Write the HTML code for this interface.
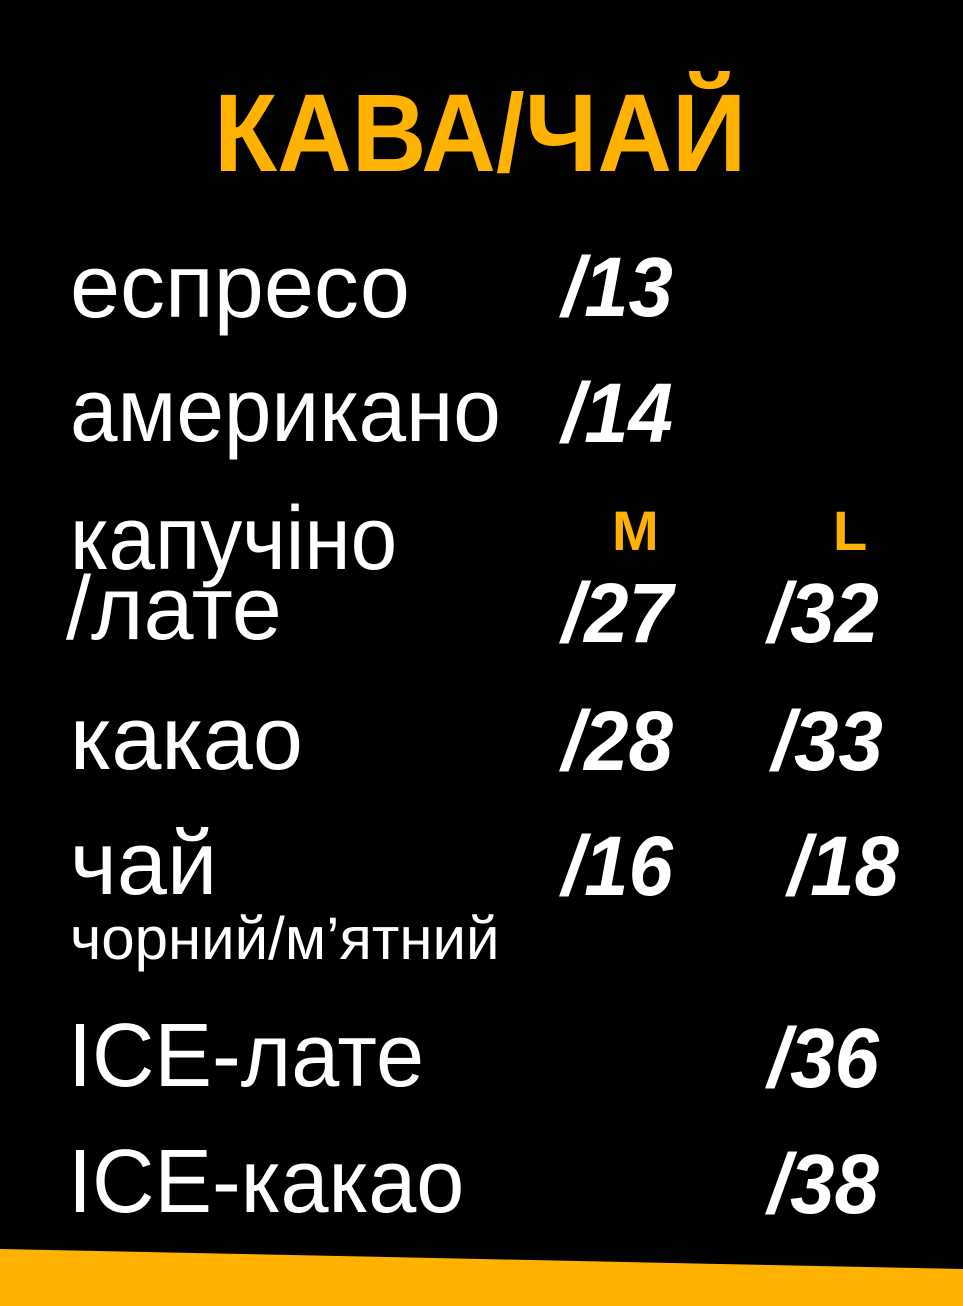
<!DOCTYPE html>
<html><head><meta charset="utf-8"><style>
html,body{margin:0;padding:0;background:#000;width:963px;height:1306px;overflow:hidden;position:relative;font-family:"Liberation Sans",sans-serif}
.t{position:absolute;line-height:1;white-space:nowrap;transform-origin:0 0}
.i{color:#fff;font-size:90px;font-weight:400}
.p{color:#fff;font-size:84px;font-weight:700;font-style:italic;transform:scaleX(.95)}
.y{color:#FFB200;font-weight:700}
</style></head><body>
<div class="t y" style="left:214px;top:79px;font-size:110px;transform:scaleX(.94)">КАВА/ЧАЙ</div>

<div class="t i" style="left:70px;top:242px">еспресо</div>
<div class="t i" style="left:70px;top:366px;transform:scaleX(.95)">американо</div>
<div class="t i" style="left:70px;top:494px;transform:scaleX(.93)">капучіно</div>
<div class="t i" style="left:66px;top:564px">/лате</div>
<div class="t i" style="left:70px;top:694px">какао</div>
<div class="t i" style="left:70px;top:819px">чай</div>
<div class="t i" style="left:70px;top:909px;font-size:60px">чорний/м’ятний</div>
<div class="t i" style="left:68px;top:1011px;transform:scaleX(.96)">ICE-лате</div>
<div class="t i" style="left:68px;top:1137px;transform:scaleX(.96)">ICE-какао</div>

<div class="t y" style="left:612px;top:503px;font-size:56px">M</div>
<div class="t y" style="left:833px;top:503px;font-size:56px">L</div>

<div class="t p" style="left:562px;top:245px">/13</div>
<div class="t p" style="left:562px;top:371px">/14</div>
<div class="t p" style="left:562px;top:571px">/27</div>
<div class="t p" style="left:768px;top:571px">/32</div>
<div class="t p" style="left:562px;top:699px">/28</div>
<div class="t p" style="left:772px;top:699px">/33</div>
<div class="t p" style="left:562px;top:824px">/16</div>
<div class="t p" style="left:788px;top:824px">/18</div>
<div class="t p" style="left:768px;top:1016px">/36</div>
<div class="t p" style="left:768px;top:1142px">/38</div>

<svg style="position:absolute;left:0;top:0" width="963" height="1306"><polygon points="0,1249 963,1269 963,1306 0,1306" fill="#FFB200"/></svg>
</body></html>
